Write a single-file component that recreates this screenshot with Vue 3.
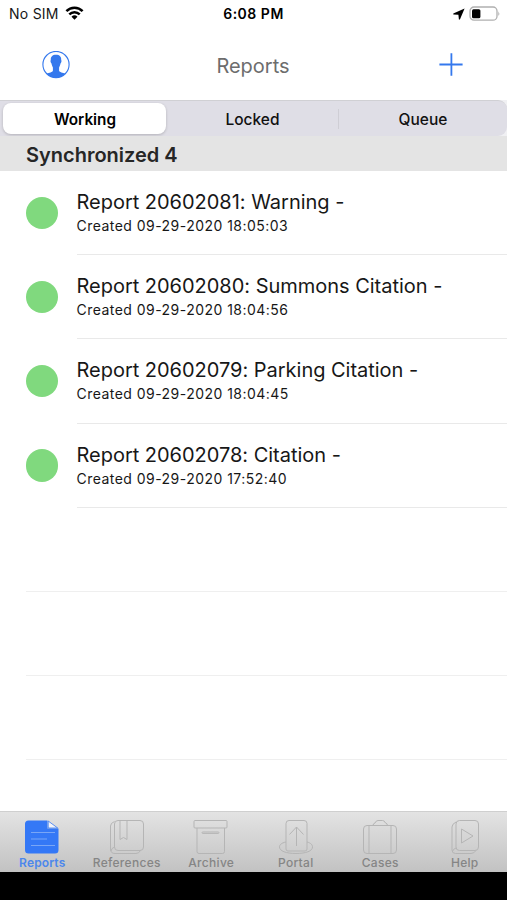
<script setup>
import { ref } from 'vue'

const segments = ['Working', 'Locked', 'Queue']
const activeSegment = ref('Working')

const reports = [
  { title: 'Report 20602081: Warning -', created: 'Created 09-29-2020 18:05:03' },
  { title: 'Report 20602080: Summons Citation -', created: 'Created 09-29-2020 18:04:56' },
  { title: 'Report 20602079: Parking Citation -', created: 'Created 09-29-2020 18:04:45' },
  { title: 'Report 20602078: Citation -', created: 'Created 09-29-2020 17:52:40' },
]

const tabs = ['Reports', 'References', 'Archive', 'Portal', 'Cases', 'Help']
const activeTab = ref('Reports')
</script>

<template>
  <div class="screen">
    <div class="status">
      <div class="carrier">
        <span>No SIM</span>
        <svg width="19" height="14" viewBox="0 0 18 14" fill="none" stroke="#000" stroke-width="2.5">
          <path d="M0.9 5.2C5.4 0.6 12.6 0.6 17.1 5.2" />
          <path d="M3.8 8.3C6.7 5.4 11.3 5.4 14.2 8.3" />
          <path d="M6 10.7Q9 8 12 10.7L9 13.8Z" fill="#000" stroke="none" />
        </svg>
      </div>
      <span class="time">6:08 PM</span>
      <div class="power">
        <svg width="12" height="12" viewBox="0 0 12 12"><path d="M11.6 0.4L0.3 5.4V6.4L5.4 6.7L5.9 11.6H6.9Z" fill="#000" /></svg>
        <svg width="32" height="16" viewBox="0 0 32 16">
          <rect x="1" y="1" width="27" height="13.2" rx="4" fill="#fff" stroke="#b0b0b0" stroke-width="1.3" />
          <rect x="3" y="3.2" width="8.4" height="9" rx="1.5" fill="#000" />
          <path d="M29.4 5.2Q31.2 7.6 29.4 10Z" fill="#aaa" />
        </svg>
      </div>
    </div>

    <header class="nav">
      <svg class="user" width="28" height="28" viewBox="0 0 28 28">
        <circle cx="14" cy="13.5" r="13.1" fill="#fff" stroke="#3478ed" stroke-width="1.1" />
        <path transform="translate(0 -0.5)" d="M14 4.3C17.6 4.3 19.5 6.2 19.2 9.6C19.9 10.2 19.3 12.7 18.5 13.1C18.2 15 17.5 16 17.1 17.1V20.2C17.5 22 20.8 21.8 23.2 23.2Q19.4 27.1 14 27.1T4.8 23.2C7.2 21.8 10.5 22 10.9 20.2V17.1C10.5 16 9.8 15 9.5 13.1C8.7 12.7 8.1 10.2 8.8 9.6C8.5 6.2 10.4 4.3 14 4.3Z" fill="#3478ed" />
      </svg>
      <h1>Reports</h1>
      <svg class="plus" width="24" height="24" viewBox="0 0 24 24" stroke="#3478ed" stroke-width="1.8" fill="none">
        <path d="M0.4 11.5H23.6M12.4 0.3V22.7" />
      </svg>
    </header>

    <div class="segmented">
      <div class="track">
        <button
          v-for="s in segments"
          :key="s"
          :class="['segment', { active: s === activeSegment }]"
          @click="activeSegment = s"
        >{{ s }}</button>
      </div>
    </div>

    <h2 class="section">Synchronized 4</h2>

    <main class="list">
      <div v-for="r in reports" :key="r.title" class="row">
        <span class="dot"></span>
        <div class="body">
          <div class="title">{{ r.title }}</div>
          <div class="created">{{ r.created }}</div>
        </div>
      </div>
      <div v-for="n in 3" :key="n" class="row empty"><div class="body"></div></div>
    </main>

    <nav class="tabs">
      <button
        v-for="t in tabs"
        :key="t"
        :class="['tab', { active: t === activeTab }]"
        @click="activeTab = t"
      >
        <svg width="36" height="36" viewBox="0 0 36 36" fill="none" stroke="currentColor" stroke-width="1">
          <template v-if="t === 'Reports'">
            <path d="M4.5 1.5H23.5V9.5H34.5V31Q34.5 34.5 31 34.5H4.5Q1 34.5 1 31V5Q1 1.5 4.5 1.5Z" fill="#3478f6" stroke="none" />
            <path d="M24.2 2L33.7 9H24.2Z" fill="#f4f4f8" stroke="#3478f6" stroke-width=".8" />
            <path d="M7 13.5H31M7 20H23M7 26.5H31" stroke="#79a6f6" stroke-width="1" />
          </template>
          <template v-else-if="t === 'References'">
            <rect x="5.5" y="1.5" width="29" height="30" rx="3.5" />
            <path d="M5.5 2.5Q1.5 4 1.5 7V30Q1.5 34.5 6 34.5H27Q30 34.5 31.5 31.5M5.5 28Q2.5 29 2 32" />
            <path d="M11 1.5V20.5L14.5 18.5L18 20.5V1.5" />
          </template>
          <template v-else-if="t === 'Archive'">
            <rect x="1" y="1.5" width="33" height="7.5" rx="1" />
            <path d="M4 9V32.5Q4 34.5 6 34.5H29.5Q31.5 34.5 31.5 32.5V9" />
            <rect x="9" y="13" width="17" height="1.4" rx=".7" />
          </template>
          <template v-else-if="t === 'Portal'">
            <path d="M8 30V4.5Q8 1.5 11 1.5H26Q29 1.5 29 4.5V30Q29 32 27 32H10Q8 32 8 30Z" />
            <path d="M8 23C3 24 1.5 26 1.5 28C1.5 32 8 34.5 18 34.5S34.5 32 34.5 28C34.5 26 33 24 29 23" />
            <path d="M18.5 27V8M11.5 15.5L18.5 8L25.5 15.5" />
          </template>
          <template v-else-if="t === 'Cases'">
            <rect x="1.5" y="6.5" width="33" height="28" rx="3.5" />
            <path d="M7 6.5V34.5M29 6.5V34.5M11 6.5Q11 4.5 13 4Q14 1.5 16 1.5H20.5Q22.5 1.5 23.5 4Q25.5 4.5 25.5 6.5" />
          </template>
          <template v-else>
            <rect x="9" y="1.5" width="22.5" height="30" rx="3.5" />
            <path d="M9 3Q5 5 5 8V31Q5 34.5 8.5 34.5H24Q27 34.5 29 31.5M9 29Q6 30 5.5 32.5" />
            <path d="M14.5 10L26 17L14.5 24Z" />
          </template>
        </svg>
        <span>{{ t }}</span>
      </button>
    </nav>
  </div>
</template>

<style>
body {
  margin: 0;
  background: #000;
}
</style>

<style scoped>
.screen {
  width: 507px;
  height: 900px;
  display: flex;
  flex-direction: column;
  overflow: hidden;
  background: #000;
  font-family: Inter, "Liberation Sans", sans-serif;
  color: #171717;
}
button {
  border: 0;
  padding: 0;
  background: none;
  font-family: inherit;
}
svg {
  display: block;
  flex: none;
}
.status {
  height: 28px;
  background: #fff;
  display: grid;
  grid-template-columns: 1fr auto 1fr;
  align-items: center;
  padding: 0 6px 0 9px;
  box-sizing: border-box;
  font-size: 14px;
  line-height: 18px;
}
.carrier {
  display: flex;
  align-items: center;
  gap: 6px;
  letter-spacing: 0.25px;
}
.carrier svg {
  margin-top: -2px;
}
.time {
  font-weight: 600;
  font-size: 14px;
  letter-spacing: 0.5px;
  margin-right: 3px;
  color: #000;
}
.power {
  display: flex;
  align-items: center;
  justify-content: flex-end;
  gap: 4px;
}
.power svg {
  margin-top: -1px;
}
.nav {
  height: 72px;
  background: #fff;
  display: flex;
  align-items: center;
  justify-content: space-between;
  padding: 1px 44px 0 42px;
  box-sizing: border-box;
}
h1 {
  margin: 2px 3px 0 0;
  font-size: 20px;
  font-weight: 400;
  color: #6d6d6d;
}
.segmented {
  height: 36px;
  background: #f0f0f3;
}
.track {
  height: 36px;
  box-sizing: border-box;
  border-top: 1px solid #d0d0d4;
  border-radius: 0 9px 9px 0;
  background: #dfdee6;
  padding: 2px 0 2px 3px;
  display: grid;
  grid-template-columns: 163px 1fr 169px;
  column-gap: 1px;
}
.segment {
  padding: 1px 0 0 1px;
  font-size: 15.5px;
  font-weight: 500;
  color: #111;
}
.segment.active {
  background: #fff;
  border-radius: 8px;
  font-weight: 600;
  font-size: 15.3px;
  color: #000;
  box-shadow: 0 1px 3px rgba(0, 0, 0, 0.2);
}
.segment:last-child {
  background: linear-gradient(#cfced5, #cfced5) 0 50% / 1px 20px no-repeat;
}
.section {
  height: 35px;
  margin: 0;
  padding-left: 26px;
  background: #e4e4e4;
  font-size: 20px;
  font-weight: 600;
  line-height: 38px;
  color: #262626;
}
.list {
  flex: 1;
  background: #fff;
  overflow: hidden;
}
.row {
  height: 84.2px;
  display: flex;
  padding-left: 25.5px;
}
.dot {
  width: 32.5px;
  height: 32.5px;
  margin: 25.5px 18.5px 0 0;
  border-radius: 50%;
  background: #80d97e;
}
.body {
  flex: 1;
  box-sizing: border-box;
  padding-top: 19px;
  border-bottom: 1.5px solid #e9e9e9;
  white-space: nowrap;
}
.empty .body {
  border-bottom-color: #efefef;
}
.title {
  font-size: 20px;
  line-height: 25px;
  letter-spacing: -0.02px;
}
.created {
  font-size: 14px;
  line-height: 18px;
  margin-top: 2px;
  letter-spacing: 0.46px;
}
.tabs {
  height: 60.5px;
  margin-bottom: 28.5px;
  box-sizing: border-box;
  border-top: 1px solid #cfcfcf;
  background: linear-gradient(#e3e3e3, #c2c2c2);
  display: grid;
  grid-template-columns: repeat(6, 1fr);
}
.tab {
  display: flex;
  flex-direction: column;
  align-items: center;
  padding-top: 7px;
  color: #b5b5b5;
}
.tab span {
  font-size: 12px;
  font-weight: 500;
  line-height: 15px;
  color: #858585;
  letter-spacing: 0.3px;
}
.tab.active span {
  color: #4c87ec;
  font-weight: 600;
  letter-spacing: 0.15px;
}
</style>
